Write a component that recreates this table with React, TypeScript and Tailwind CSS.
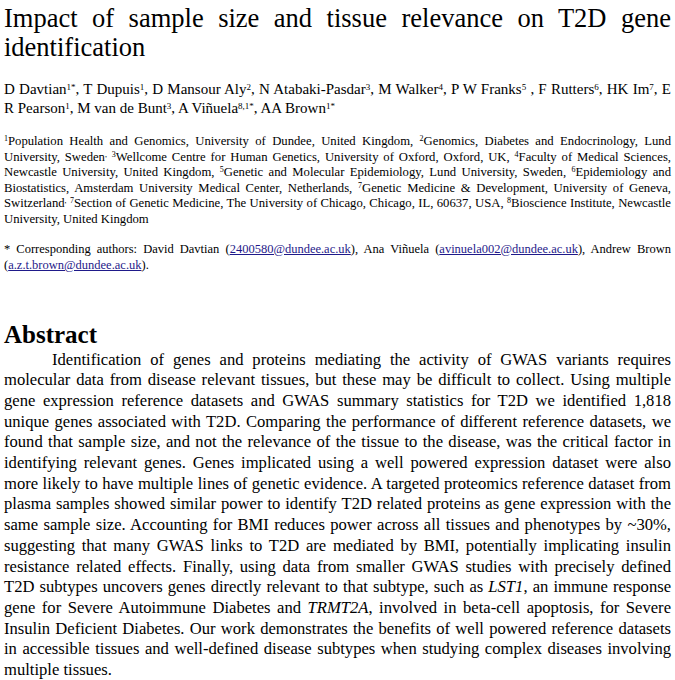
export default function App() {
  return (
    <div className="min-h-[680px] bg-white px-[4px] pt-[4px] font-['Liberation_Serif',serif] text-black">
      <h1 className="text-justify text-[26.5px] leading-[29px] font-normal">
        Impact of sample size and tissue relevance on T2D gene identification
      </h1>

      <p className="mt-[18px] text-justify text-[15px] leading-[19px] [&_sup]:text-[9px]">
        D Davtian<sup>1*</sup>, T Dupuis<sup>1</sup>, D Mansour Aly<sup>2</sup>, N Atabaki-Pasdar<sup>3</sup>, M Walker<sup>4</sup>, P W Franks<sup>5</sup> , F Rutters<sup>6</sup>, HK Im<sup>7</sup>, E R Pearson<sup>1</sup>, M van de Bunt<sup>3</sup>, A Viñuela<sup>8,1*</sup>, AA Brown<sup>1*</sup>
      </p>

      <p className="mt-[16px] text-justify text-[12.7px] leading-[15.6px] [&_sup]:text-[8px]">
        <sup>1</sup>Population Health and Genomics, University of Dundee, United Kingdom, <sup>2</sup>Genomics, Diabetes and Endocrinology, Lund University, Sweden<sup>,</sup> <sup>3</sup>Wellcome Centre for Human Genetics, University of Oxford, Oxford, UK, <sup>4</sup>Faculty of Medical Sciences, Newcastle University, United Kingdom, <sup>5</sup>Genetic and Molecular Epidemiology, Lund University, Sweden, <sup>6</sup>Epidemiology and Biostatistics, Amsterdam University Medical Center, Netherlands, <sup>7</sup>Genetic Medicine &amp; Development, University of Geneva, Switzerland<sup>,</sup> <sup>7</sup>Section of Genetic Medicine, The University of Chicago, Chicago, IL, 60637, USA, <sup>8</sup>Bioscience Institute, Newcastle University, United Kingdom
      </p>

      <p className="mt-[13px] text-justify text-[12.5px] leading-[16px]">
        * Corresponding authors: David Davtian (<a className="text-[#1f1a8a] underline">2400580@dundee.ac.uk</a>), Ana Viñuela (<a className="text-[#1f1a8a] underline">avinuela002@dundee.ac.uk</a>), Andrew Brown (<a className="text-[#1f1a8a] underline">a.z.t.brown@dundee.ac.uk</a>).
      </p>

      <h2 className="mt-[48px] text-[25px] leading-[28px] font-bold">Abstract</h2>

      <p className="mt-[1px] text-justify indent-[48px] text-[16.6px] leading-[20.7px]">
        Identification of genes and proteins mediating the activity of GWAS variants requires molecular data from disease relevant tissues, but these may be difficult to collect. Using multiple gene expression reference datasets and GWAS summary statistics for T2D we identified 1,818 unique genes associated with T2D. Comparing the performance of different reference datasets, we found that sample size, and not the relevance of the tissue to the disease, was the critical factor in identifying relevant genes. Genes implicated using a well powered expression dataset were also more likely to have multiple lines of genetic evidence. A targeted proteomics reference dataset from plasma samples showed similar power to identify T2D related proteins as gene expression with the same sample size. Accounting for BMI reduces power across all tissues and phenotypes by ~30%, suggesting that many GWAS links to T2D are mediated by BMI, potentially implicating insulin resistance related effects. Finally, using data from smaller GWAS studies with precisely defined T2D subtypes uncovers genes directly relevant to that subtype, such as <i>LST1</i>, an immune response gene for Severe Autoimmune Diabetes and <i>TRMT2A</i>, involved in beta-cell apoptosis, for Severe Insulin Deficient Diabetes. Our work demonstrates the benefits of well powered reference datasets in accessible tissues and well-defined disease subtypes when studying complex diseases involving multiple tissues.
      </p>
    </div>
  );
}
